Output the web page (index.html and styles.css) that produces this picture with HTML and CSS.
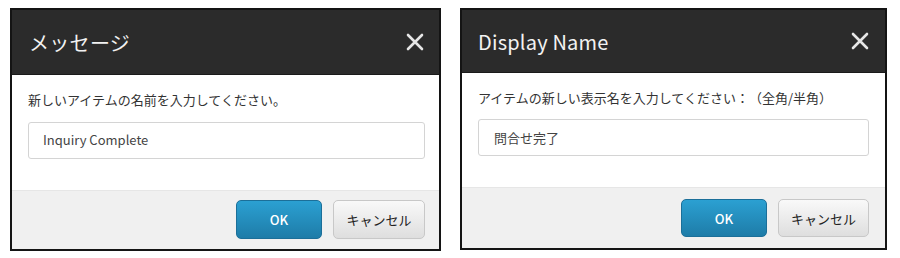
FILE: index.html
```html
<!DOCTYPE html>
<html lang="ja">
<head>
<meta charset="utf-8">
<link rel="stylesheet" href="styles.css">
</head>
<body>
<div class="stage">
  <section class="dialog dialog-a">
    <header class="dlg-head">
      <h1 class="dlg-title">メッセージ</h1>
      <svg class="dlg-close" viewBox="0 0 18 18" width="18" height="18"><path d="M2 2 L16 16 M16 2 L2 16" stroke="#e6e6e6" stroke-width="2.6" stroke-linecap="round"/></svg>
    </header>
    <div class="dlg-body">
      <p class="dlg-label">新しいアイテムの名前を入力してください。</p>
      <div class="dlg-input">Inquiry Complete</div>
    </div>
    <footer class="dlg-foot">
      <button class="btn btn-ok">OK</button>
      <button class="btn btn-cancel">キャンセル</button>
    </footer>
  </section>
  <section class="dialog dialog-b">
    <header class="dlg-head">
      <h1 class="dlg-title dlg-title-latin">Display Name</h1>
      <svg class="dlg-close" viewBox="0 0 18 18" width="18" height="18"><path d="M2 2 L16 16 M16 2 L2 16" stroke="#e6e6e6" stroke-width="2.6" stroke-linecap="round"/></svg>
    </header>
    <div class="dlg-body">
      <p class="dlg-label">アイテムの新しい表示名を入力してください：（全角/半角）</p>
      <div class="dlg-input">問合せ完了</div>
    </div>
    <footer class="dlg-foot">
      <button class="btn btn-ok">OK</button>
      <button class="btn btn-cancel">キャンセル</button>
    </footer>
  </section>
</div>
</body>
</html>
```
FILE: styles.css
```css
* { box-sizing: border-box; }
html, body { margin: 0; padding: 0; background: #fff; }
body {
  font-family: "Noto Sans CJK JP", "Noto Sans", sans-serif;
  color: #333;
  text-spacing-trim: space-all;
}
.stage {
  display: flex;
  align-items: flex-start;
  gap: 19px;
  padding: 8px 0 0 10px;
}
.dialog {
  display: flex;
  flex-direction: column;
  border: 2px solid #141414;
  background: #fff;
}
.dialog-a { width: 431px; height: 243px; }
.dialog-b { width: 427px; height: 242px; }

.dlg-head {
  background: #2b2b2b;
  display: flex;
  align-items: center;
  justify-content: space-between;
  padding: 0 16px 0 17px;
  border-bottom: 1px solid #1a1a1a;
}
.dialog-a .dlg-head { height: 65px; padding-right: 15px; }
.dialog-b .dlg-head { height: 63px; padding-left: 16px; }
.dlg-title {
  margin: 0;
  font-weight: 400;
  font-size: 20px;
  color: #f2f2f2;
  letter-spacing: 0.3px;
}
.dlg-title-latin { font-size: 20px; letter-spacing: 0.2px; }
.dlg-close { display: block; }

.dlg-body {
  flex: 1;
  padding: 0 14px 0 16px;
}
.dialog-b .dlg-body { padding-right: 16px; }
.dlg-label {
  margin: 15px 0 0;
  font-size: 13px;
  line-height: 20px;
  color: #333;
}
.dialog-b .dlg-label { margin-top: 15px; }
.dlg-input {
  margin-top: 12px;
  height: 37px;
  border: 1px solid #d4d4d4;
  border-radius: 3px;
  padding: 0 14px 2px;
  display: flex;
  align-items: center;
  font-size: 13px;
  color: #444;
}
.dialog-b .dlg-input { margin-top: 11px; padding: 0 14px 0 15px; }

.dlg-foot {
  background: #f0f0f0;
  border-top: 1px solid #e6e6e6;
  display: flex;
  justify-content: flex-end;
  align-items: center;
  gap: 11px;
  padding: 0 14px 0 0;
}
.dialog-a .dlg-foot { height: 59px; padding-bottom: 2px; }
.dialog-b .dlg-foot { height: 61px; padding-right: 16px; }
.btn {
  font-family: "Noto Sans CJK JP", "Noto Sans", sans-serif;
  font-size: 13px;
  height: 39px;
  border-radius: 5px;
  cursor: pointer;
}
.btn-ok {
  width: 86px;
  color: #fff;
  font-weight: 500;
  background: linear-gradient(#2ba0d2, #1e7ca8);
  border: 1px solid #1b6f99;
}
.btn-cancel {
  width: 92px;
  color: #222;
  background: linear-gradient(#f9f9f9, #dedede);
  border: 1px solid #c8c8c8;
}
.dialog-b .btn { height: 38px; }
.dialog-b .btn-cancel { width: 91px; }
```
